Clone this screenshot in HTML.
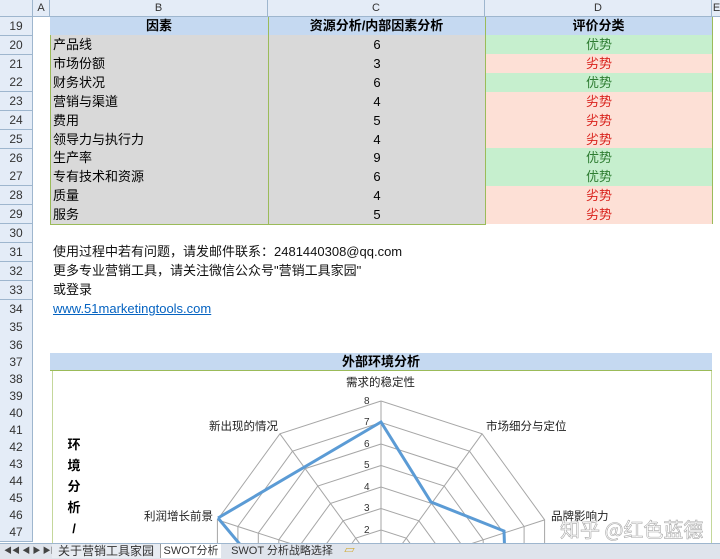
<!DOCTYPE html><html><head><meta charset="utf-8"><style>
body{margin:0;width:720px;height:558px;overflow:hidden;background:#fff;font-family:"Liberation Sans","Noto Sans CJK SC",sans-serif;font-size:13px;position:relative}
.a{position:absolute}
.rn{position:absolute;left:0;width:33px;text-align:center;font-size:12px;color:#333;background:#e4ecf7;border-bottom:1px solid #9eb6ce;border-right:1px solid #9eb6ce;box-sizing:border-box}
.ch{position:absolute;top:0;height:17px;background:#e4ecf7;border-right:1px solid #9eb6ce;border-bottom:1px solid #9eb6ce;box-sizing:border-box;text-align:center;font-size:11px;line-height:16px;color:#333}
.c{position:absolute;box-sizing:border-box;line-height:19px;height:19px}
</style></head><body>
<div class="a" style="left:0;top:0;width:720px;height:17px;background:#e4ecf7"></div>
<div class="ch" style="left:0;width:33px"></div>
<div class="ch" style="left:33px;width:17px">A</div>
<div class="ch" style="left:50px;width:218px">B</div>
<div class="ch" style="left:268px;width:217px">C</div>
<div class="ch" style="left:485px;width:227px">D</div>
<div class="ch" style="left:712px;width:10px">E</div>
<div id="rows"></div>
<div class="a" style="left:50px;top:17px;width:662px;height:18px;background:#c5d9f1;border-bottom:1px solid #9bbb59;font-weight:bold;font-size:13px;line-height:18px">
<span class="a" style="left:0;width:218px;text-align:center">因素</span><span class="a" style="left:218px;width:217px;text-align:center">资源分析/内部因素分析</span><span class="a" style="left:435px;width:227px;text-align:center">评价分类</span></div>
<div class="a" style="left:50px;top:35px;width:435px;height:189px;background:#d9d9d9;border-left:1px solid #9bbb59;border-bottom:1px solid #9bbb59"></div>
<div id="tbl"></div>
<div class="a" style="left:268px;top:17px;width:1px;height:207px;background:#9bbb59"></div>
<div class="a" style="left:485px;top:17px;width:1px;height:207px;background:#9bbb59"></div>
<div class="a" style="left:712px;top:17px;width:1px;height:207px;background:#9bbb59"></div>
<div class="a" style="left:53px;top:243px;line-height:18px;font-size:13px;color:#111">
<div>使用过程中若有问题，请发邮件联系：2481440308@qq.com</div>
<div style="margin-top:1px">更多专业营销工具，请关注微信公众号"营销工具家园"</div>
<div style="margin-top:1px">或登录</div>
<div style="margin-top:1px;color:#0563c1;text-decoration:underline">www.51marketingtools.com</div></div>
<div class="a" style="left:50px;top:353px;width:662px;height:17px;background:#c5d9f1;border-bottom:1px solid #9bbb59;text-align:center;font-weight:bold;line-height:17px">外部环境分析</div>
<div class="a" style="left:52px;top:371px;width:658px;height:172px;background:#fff;border-left:1px solid #c4d79b;border-right:1px solid #c4d79b"></div>
<div class="a" style="left:66px;top:434px;width:16px;font-weight:bold;font-size:13px;line-height:21px;text-align:center">环<br>境<br>分<br>析<br>/</div>
<svg class="a" style="left:0;top:0" width="720" height="543">
<g id="web" stroke="#a6a6a6" fill="none" stroke-width="1"></g>
<polyline points="218,518 381,422 431,502 504,531 505,560" stroke="#5b9bd5" stroke-width="3" fill="none"/>
<polyline points="218,518 253,560" stroke="#5b9bd5" stroke-width="3" fill="none"/>
<g font-size="10" fill="#333" font-family="Liberation Sans">
<text x="364" y="404">8</text><text x="364" y="425">7</text><text x="364" y="447">6</text><text x="364" y="468">5</text><text x="364" y="490">4</text><text x="364" y="511">3</text><text x="364" y="533">2</text></g>
<g font-size="11.5" fill="#222" font-family="Liberation Sans,Noto Sans CJK SC,sans-serif">
<text x="346" y="386">需求的稳定性</text><text x="486" y="430">市场细分与定位</text><text x="551" y="520">品牌影响力</text><text x="209" y="430">新出现的情况</text><text x="144" y="520">利润增长前景</text></g>
<text x="560" y="537" font-size="20" fill="#fff" stroke="#aaa" stroke-width="0.6" font-family="Noto Sans CJK SC,sans-serif">知乎 @红色蓝德</text>
</svg>
<div class="a" style="left:0;top:543px;width:720px;height:15px;background:#dfe4ec;border-top:1px solid #9eb6ce;font-size:11px;line-height:14px;white-space:nowrap;overflow:hidden">
<span class="a" style="left:4px;color:#444;font-size:8px">◀◀ ◀ ▶ ▶▶</span>
<span class="a" style="left:52px;width:108px;text-align:center;background:#e8ecf2;color:#333;border-right:1px solid #999;font-size:12px">关于营销工具家园</span>
<span class="a" style="left:161px;width:60px;text-align:center;background:#fff;color:#333">SWOT分析</span>
<span class="a" style="left:226px;width:112px;text-align:center;color:#333;font-size:11px">SWOT 分析战略选择</span>
<span class="a" style="left:344px;width:20px;color:#c90">▱</span></div>
<script>
var cs=[26];for(var i=1;i<=10;i++)cs.push(26+18.8*i);
cs=cs.concat([233,252,271,290,309,327,345,362,379,396,413,430,447,464,481,498,515,532]);
var h='';for(var n=0;n<cs.length;n++){var ty=Math.round(cs[n]-9);h+='<div class="rn" style="top:'+ty+'px;height:19px;line-height:19px">'+(19+n)+'</div>';}
document.getElementById('rows').innerHTML=h;
var d=[["产品线",6,1],["市场份额",3,0],["财务状况",6,1],["营销与渠道",4,0],["费用",5,0],["领导力与执行力",4,0],["生产率",9,1],["专有技术和资源",6,1],["质量",4,0],["服务",5,0]];
var t='';d.forEach(function(r,i){var y=35+i*18.9;t+='<div class="c" style="left:53px;top:'+y+'px">'+r[0]+'</div><div class="c" style="left:269px;width:216px;top:'+y+'px;text-align:center">'+r[1]+'</div><div class="c" style="left:486px;width:226px;top:'+y+'px;text-align:center;background:'+(r[2]?'#c6efce;color:#2e7d32':'#fde0d6;color:#d9231d')+'">'+(r[2]?'优势':'劣势')+'</div>';});
document.getElementById('tbl').innerHTML=t;
var cx=381,cy=573,u=21.5,g='';
for(var k=1;k<=8;k++){var p=[];for(var j=0;j<=10;j++){var a=j*Math.PI/5;p.push((cx+k*u*Math.sin(a)).toFixed(1)+','+(cy-k*u*Math.cos(a)).toFixed(1));}g+='<polyline points="'+p.join(' ')+'"/>';}
for(var j=0;j<10;j++){var a=j*Math.PI/5;g+='<line x1="'+cx+'" y1="'+cy+'" x2="'+(cx+8*u*Math.sin(a))+'" y2="'+(cy-8*u*Math.cos(a))+'"/>';}
document.getElementById('web').innerHTML=g;
</script>
</body></html>
